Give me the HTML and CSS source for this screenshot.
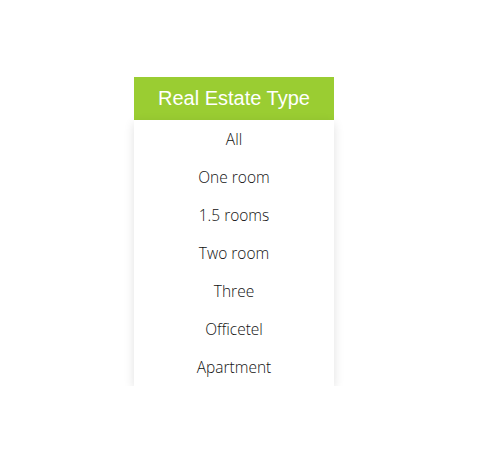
FILE: index.html
```html
<!DOCTYPE html>
<html>
<head>
<meta charset="utf-8">
<link rel="stylesheet" href="styles.css">
</head>
<body>
<div class="dropdown">
  <div class="title">Real Estate Type</div>
  <ul class="menu">
    <li>All</li>
    <li>One room</li>
    <li>1.5 rooms</li>
    <li>Two room</li>
    <li>Three</li>
    <li>Officetel</li>
    <li>Apartment</li>
  </ul>
</div>
</body>
</html>
```
FILE: styles.css
```css
html, body {
  margin: 0;
  background: #fff;
}
body {
  padding: 77px 0 0 134px;
}
.dropdown {
  width: 200px;
}
.title {
  height: 43px;
  background: #9acd32;
  color: #fff;
  font-family: "Liberation Sans", Arial, sans-serif;
  font-size: 20px;
  display: flex;
  align-items: center;
  justify-content: center;
}
.menu {
  list-style: none;
  margin: 0;
  padding: 0;
  background: #fff;
  box-shadow: 0 3px 10px rgba(0, 0, 0, 0.12);
}
.menu li {
  height: 38px;
  display: flex;
  align-items: center;
  justify-content: center;
  font-family: "Open Sans", sans-serif;
  font-weight: 300;
  font-size: 15.5px;
  color: #111;
}
```
